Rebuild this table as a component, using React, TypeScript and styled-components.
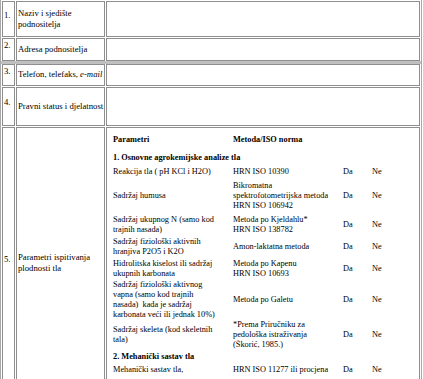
import { Fragment } from "react";
import styled, { createGlobalStyle } from "styled-components";

const GlobalStyle = createGlobalStyle`
  body {
    margin: 0;
    background: #ffffff;
    color: #000000;
    font-family: "Liberation Serif", "Times New Roman", serif;
  }
`;

const FormTable = styled.table`
  width: 422px;
  margin-top: -1px;
  table-layout: fixed;
  border-collapse: separate;
  border-spacing: 1px;
  border: 1px solid #a8a8a8;
`;

const Cell = styled.td<{ $h?: number }>`
  box-sizing: border-box;
  height: ${(p) => (p.$h ? `${p.$h}px` : "auto")};
  border: 1px solid #8e8e8e;
  padding: 0 1px;
  vertical-align: middle;
  font-size: 8.7px;
  line-height: 11.5px;
  white-space: nowrap;
`;

const NumCell = styled(Cell)`
  width: 13px;
  padding-bottom: 7px;
`;

const LabelCell = styled(Cell)`
  width: 89px;
`;

const ValueCell = styled(Cell)`
  padding: 6px 0 0 6px;
  vertical-align: top;
`;

const BarCell = styled.td`
  height: 1px;
  padding: 0;
  background: #c0c0c0;
  box-shadow: 0 0 0 1px #c0c0c0;
`;

const ParamTable = styled.table`
  border-collapse: collapse;
  table-layout: fixed;
  width: 300px;
  font-size: 8.3px;
  line-height: 10px;
`;

const ParamCell = styled.td<{ $bold?: boolean; $pad?: string }>`
  padding: ${(p) => p.$pad ?? "1px 0"};
  white-space: nowrap;
  vertical-align: middle;
  font-weight: ${(p) => (p.$bold ? 700 : 400)};
`;

type Param = {
  name: string[];
  method: string[];
  pad: number;
};

const basic: Param[] = [
  { name: ["Reakcija tla ( pH KCl i H2O)"], method: ["HRN ISO 10390"], pad: 1 },
  {
    name: ["Sadržaj humusa"],
    method: ["Bikromatna", "spektrofotometrijska metoda", "HRN ISO 106942"],
    pad: 3,
  },
  {
    name: ["Sadržaj ukupnog N (samo kod", "trajnih nasada)"],
    method: ["Metoda po Kjeldahlu*", "HRN ISO 138782"],
    pad: 1,
  },
  {
    name: ["Sadržaj fiziološki aktivnih", "hranjiva P2O5 i K2O"],
    method: ["Amon-laktatna metoda"],
    pad: 1,
  },
  {
    name: ["Hidrolitska kiselost ili sadržaj", "ukupnih karbonata"],
    method: ["Metoda po Kapenu", "HRN ISO 10693"],
    pad: 1,
  },
  {
    name: [
      "Sadržaj fiziološki aktivnog",
      "vapna (samo kod trajnih",
      "nasada)\u00a0 kada je sadržaj",
      "karbonata veći ili jednak 10%)",
    ],
    method: ["Metoda po Galetu"],
    pad: 0,
  },
  {
    name: ["Sadržaj skeleta (kod skeletnih", "tala)"],
    method: ["*Prema Priručniku za", "pedološka istraživanja", "(Škorić, 1985.)"],
    pad: 0,
  },
];

const mechanical: Param[] = [
  { name: ["Mehanički sastav tla,"], method: ["HRN ISO 11277 ili procjena"], pad: 2 },
];

const Lines = ({ lines }: { lines: string[] }) => (
  <>
    {lines.map((l, i) => (
      <div key={i}>{l}</div>
    ))}
  </>
);

const ParamRows = ({ items }: { items: Param[] }) => (
  <>
    {items.map((it, i) => {
      const pad = `${it.pad}px 0`;
      return (
        <tr key={i}>
          <ParamCell $pad={pad}>
            <Lines lines={it.name} />
          </ParamCell>
          <ParamCell $pad={pad}>
            <Lines lines={it.method} />
          </ParamCell>
          <ParamCell $pad={pad}>Da</ParamCell>
          <ParamCell $pad={pad}>Ne</ParamCell>
        </tr>
      );
    })}
  </>
);

const Section = ({ title, pad }: { title: string; pad: string }) => (
  <tr>
    <ParamCell colSpan={4} $bold $pad={pad}>
      {title}
    </ParamCell>
  </tr>
);

const rows = [
  {
    n: "1.",
    label: (
      <>
        Naziv i sjedište
        <br />
        podnositelja
      </>
    ),
    h: 36,
  },
  { n: "2.", label: <>Adresa podnositelja</>, h: 23 },
  {
    n: "3.",
    label: (
      <>
        Telefon, telefaks, <i>e-mail</i>
      </>
    ),
    h: 22,
  },
  { n: "4.", label: <>Pravni status i djelatnost</>, h: 39 },
];

export default function App() {
  return (
    <>
      <GlobalStyle />
      <FormTable>
        <tbody>
          {rows.map((r, i) => (
            <Fragment key={r.n}>
              <tr>
                <NumCell $h={r.h}>{r.n}</NumCell>
                <LabelCell $h={r.h}>{r.label}</LabelCell>
                <Cell $h={r.h} />
              </tr>
              {i === 1 && (
                <tr>
                  <BarCell colSpan={3} />
                </tr>
              )}
            </Fragment>
          ))}
          <tr>
            <NumCell $h={272}>5.</NumCell>
            <LabelCell $h={272}>
              Parametri ispitivanja
              <br />
              plodnosti tla
            </LabelCell>
            <ValueCell $h={272}>
              <ParamTable>
                <colgroup>
                  <col style={{ width: 120 }} />
                  <col style={{ width: 110 }} />
                  <col style={{ width: 29 }} />
                  <col style={{ width: 41 }} />
                </colgroup>
                <tbody>
                  <tr>
                    <ParamCell $bold $pad="1px 0 5px">
                      Parametri
                    </ParamCell>
                    <ParamCell $bold $pad="1px 0 5px">
                      Metoda/ISO norma
                    </ParamCell>
                    <ParamCell />
                    <ParamCell />
                  </tr>
                  <Section title="1. Osnovne agrokemijske analize tla" pad="3px 0" />
                  <ParamRows items={basic} />
                  <Section title="2. Mehanički sastav tla" pad="1.5px 0" />
                  <ParamRows items={mechanical} />
                </tbody>
              </ParamTable>
            </ValueCell>
          </tr>
        </tbody>
      </FormTable>
    </>
  );
}
